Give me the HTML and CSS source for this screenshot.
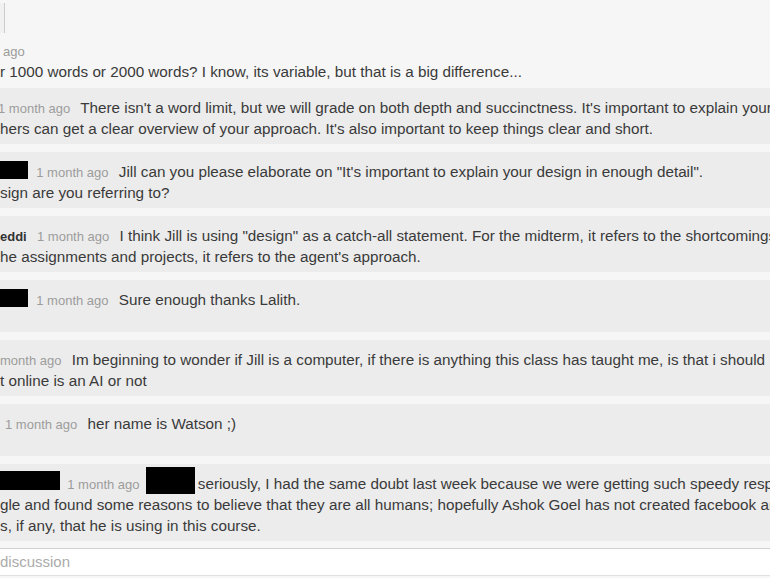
FILE: index.html
```html
<!DOCTYPE html>
<html lang="en">
<head>
  <meta charset="UTF-8">
  <title>Followup discussions</title>
  <link rel="stylesheet" href="styles.css">
</head>
<body>
  <div class="thread">
    <div class="post">
      <div class="post-thumb"></div>
      <div class="when top-when">ago</div>
      <div class="post-text">r 1000 words or 2000 words? I know, its variable, but that is a big difference...</div>
    </div>

    <div class="replies">
      <div class="reply">
        <span class="when cut">1 month ago</span> There isn't a word limit, but we will grade on both depth and succinctness. It's important to explain your<br>
        hers can get a clear overview of your approach. It's also important to keep things clear and short.
      </div>

      <div class="reply">
        <span class="redact redact-name"></span> <span class="when">1 month ago</span> Jill can you please elaborate on "It's important to explain your design in enough detail".<br>
        sign are you referring to?
      </div>

      <div class="reply">
        <span class="who">eddi</span> <span class="when">1 month ago</span> I think Jill is using "design" as a catch-all statement. For the midterm, it refers to the shortcomings<br>
        he assignments and projects, it refers to the agent's approach.
      </div>

      <div class="reply">
        <span class="redact redact-name"></span> <span class="when">1 month ago</span> Sure enough thanks Lalith.
      </div>

      <div class="reply">
        <span class="when">month ago</span> Im beginning to wonder if Jill is a computer, if there is anything this class has taught me, is that i should<br>
        t online is an AI or not
      </div>

      <div class="reply">
        <span class="when shifted">1 month ago</span> her name is Watson ;)
      </div>

      <div class="reply">
        <span class="redact redact-long"></span> <span class="when">1 month ago</span> <span class="redact redact-mention"></span>seriously, I had the same doubt last week because we were getting such speedy responses<br>
        gle and found some reasons to believe that they are all humans; hopefully Ashok Goel has not created facebook and<br>
        s, if any, that he is using in this course.
      </div>
    </div>

    <div class="new-followup">discussion</div>
  </div>
</body>
</html>
```

FILE: styles.css
```css
body {
  margin: 0;
  height: 100vh;
  overflow: hidden;
  background: #f6f6f6;
  color: #3a3a3a;
  font-family: "Liberation Sans", Arial, sans-serif;
}

.post-thumb {
  width: 4px;
  height: 30px;
  margin-top: 3px;
  background: #f1f1f1;
  border-right: 1px solid #cccccc;
}
.post-text {
  font-size: 15.25px;
  line-height: 21px;
  white-space: nowrap;
}

.replies {
  display: flex;
  flex-direction: column;
  gap: 8px;
  padding-top: 6px;
}
.reply {
  min-height: 38px;
  padding: 9px 0 5px;
  background: #ececec;
  font-size: 15.25px;
  line-height: 21px;
  white-space: nowrap;
}

.when {
  margin-right: 6px;
  color: #9c9c9c;
  font-size: 13px;
  line-height: 1;
}
.when.top-when {
  margin-top: 10px;
  padding-left: 3px;
  line-height: 18px;
}
.when.cut {
  margin-left: -2px;
}
.when.shifted {
  margin-left: 5px;
}
.who {
  margin-right: 6px;
  color: #333;
  font-size: 13px;
  font-weight: bold;
  line-height: 1;
}

/* names blacked out in the screenshot */
.redact {
  display: inline-block;
  background: #000;
}
.redact-name {
  width: 28px;
  height: 18px;
  margin: -2px 4px 0 0;
  vertical-align: -2px;
}
.redact-long {
  width: 60px;
  height: 19px;
  margin: -3px 3px 0 0;
  vertical-align: -1px;
}
.redact-mention {
  width: 49px;
  height: 27px;
  margin: -8px 3px 0 -4px;
  vertical-align: -5px;
}

.new-followup {
  margin-top: 7px;
  height: 26px;
  background: #fff;
  border-top: 1px solid #d2d2d2;
  border-bottom: 1px solid #e0e0e0;
  color: #ababab;
  font-size: 15px;
  line-height: 26px;
}
```
